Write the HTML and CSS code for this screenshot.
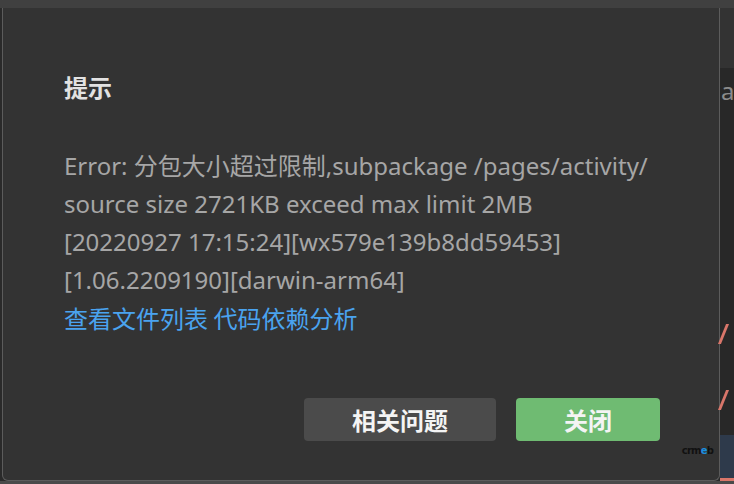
FILE: index.html
```html
<!DOCTYPE html>
<html lang="zh">
<head>
<meta charset="utf-8">
<link rel="stylesheet" href="styles.css">
</head>
<body>
<div class="topbar"></div>
<div class="main">
  <div class="leftgap"></div>
  <div class="dialog">
    <div class="title">提示</div>
    <div class="msg">
      <div>Error: 分包大小超过限制,subpackage /pages/activity/</div>
      <div>source size 2721KB exceed max limit 2MB</div>
      <div>[20220927 17:15:24][wx579e139b8dd59453]</div>
      <div>[1.06.2209190][darwin-arm64]</div>
      <div class="links"><span class="link">查看文件列表</span> <span class="link">代码依赖分析</span></div>
    </div>
    <div class="actions">
      <button class="btn btn-gray">相关问题</button>
      <button class="btn btn-green">关闭</button>
    </div>
    <div class="mark">crm<b>e</b>b</div>
  </div>
  <div class="side">
    <div class="side-top"></div>
    <div class="side-body">
      <div class="side-a">a</div>
      <div class="slash s1"></div>
      <div class="slash s2"></div>
      <div class="side-blue"></div>
    </div>
  </div>
</div>
<div class="bottombar"></div>
</body>
</html>
```
FILE: styles.css
```css
html, body {
  margin: 0;
  padding: 0;
  width: 734px;
  height: 484px;
  overflow: hidden;
  background: #2a2a2a;
  font-family: "Noto Sans", "Noto Sans CJK SC", sans-serif;
}
.topbar {
  height: 8px;
  background: #404040;
}
.main {
  display: flex;
  height: 473px;
}
.leftgap {
  width: 2px;
  background: #2a2a2a;
}
.dialog {
  position: relative;
  width: 718px;
  box-sizing: border-box;
  background: #333333;
  border: 1px solid #5c5c5c;
  border-top: none;
  border-radius: 0 0 6px 6px;
  padding: 0 0 0 61px;
  display: flex;
  flex-direction: column;
}
.title {
  margin-top: 62px;
  height: 34px;
  line-height: 34px;
  font-size: 24px;
  font-weight: 700;
  color: #e2e2e2;
  font-family: "Noto Sans CJK SC", sans-serif;
}
.msg {
  margin-top: 43px;
  font-size: 24px;
  line-height: 38px;
  color: #a6a6a6;
}
.msg > div {
  height: 38px;
  white-space: nowrap;
}
.links {
  font-family: "Noto Sans CJK SC", sans-serif;
}
.link {
  color: #4aa3ef;
}
.actions {
  display: flex;
  gap: 20px;
  margin-top: 61px;
  margin-left: 240px;
}
.btn {
  height: 43px;
  border: none;
  border-radius: 4px;
  color: #f4f4f4;
  font-size: 24px;
  font-weight: 700;
  font-family: "Noto Sans CJK SC", sans-serif;
  padding: 0;
}
.btn-gray {
  width: 192px;
  background: #4b4b4b;
}
.btn-green {
  width: 144px;
  background: #6fbb72;
}
.mark {
  position: absolute;
  right: 6px;
  bottom: 24px;
  font-size: 10px;
  font-weight: 700;
  letter-spacing: -0.8px;
  color: #111;
  font-family: "DejaVu Sans", sans-serif;
}
.mark b {
  color: #1a8fe0;
}
.side {
  flex: 1;
  display: flex;
  flex-direction: column;
}
.side-top {
  height: 60px;
  background: #333333;
}
.side-body {
  position: relative;
  flex: 1;
  background: #282828;
}
.side-a {
  position: absolute;
  left: 1px;
  top: 6px;
  font-size: 24px;
  color: #8c8c8c;
  font-family: "Noto Sans", sans-serif;
}
.slash {
  position: absolute;
  left: 2px;
  width: 3px;
  height: 20px;
  background: #d9766a;
  transform: skewX(-22deg);
}
.s1 { top: 256px; }
.s2 { top: 322px; }
.side-blue {
  position: absolute;
  left: 0;
  right: 0;
  bottom: 0;
  height: 46px;
  background: #2e3a4b;
  border-bottom: 3px solid #d9766a;
  box-sizing: border-box;
}
.bottombar {
  height: 3px;
  background: #4a4a4a;
}
```
